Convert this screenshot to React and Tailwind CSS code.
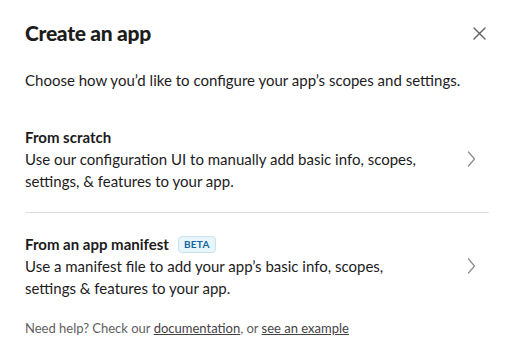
import React from 'react';

function Chevron() {
  return (
    <svg width="9" height="16" viewBox="0 0 9 16" fill="none" className="shrink-0">
      <path d="M1.5 1 L7.5 8 L1.5 15" stroke="#8a8a8a" strokeWidth="1.2" strokeLinecap="round" strokeLinejoin="round" />
    </svg>
  );
}

function Option({ title, badge, children }) {
  return (
    <button className="w-full flex items-center justify-between text-left py-[20px] pl-[25px] pr-[31px]">
      <div className="w-[402px]">
        <div className="flex items-center gap-[9px] text-[15px] leading-[22px] font-bold text-[#1d1c1d]">
          {title}
          {badge && (
            <span className="text-[10px] leading-[13px] font-bold tracking-[0.3px] text-[#1264a3] bg-[#e8f5fa] border border-[#c8e3f0] rounded-[4px] px-[5px] py-[1px]">
              {badge}
            </span>
          )}
        </div>
        <p className="text-[15px] leading-[22px] text-[#1d1c1d]">{children}</p>
      </div>
      <Chevron />
    </button>
  );
}

export default function App() {
  return (
    <div className="w-[507px] h-[357px] bg-white overflow-hidden" style={{ fontFamily: 'Lato, "Noto Sans", sans-serif' }}>
      {/* Header */}
      <div className="flex items-center justify-between pl-[25px] pr-[20px] pt-[19px]">
        <h2 className="text-[21px] leading-[28px] font-black tracking-[-0.3px] text-[#1d1c1d]">Create an app</h2>
        <button className="w-[16px] h-[16px] flex items-center justify-center">
          <svg width="13" height="13" viewBox="0 0 13 13">
            <path d="M1 1 L12 12 M12 1 L1 12" stroke="#616061" strokeWidth="1.4" strokeLinecap="round" />
          </svg>
        </button>
      </div>

      <p className="pl-[25px] mt-[22px] text-[15px] leading-[22px] text-[#1d1c1d]">
        Choose how you’d like to configure your app’s scopes and settings.
      </p>

      <div className="mt-[15px]">
        <Option title="From scratch">
          Use our configuration UI to manually add basic info, scopes, settings, &amp; features to your app.
        </Option>
        <div className="ml-[25px] mr-[18px] border-t border-[#dddddd]" />
        <Option title="From an app manifest" badge="BETA">
          Use a manifest file to add your app’s basic info, scopes, settings &amp; features to your app.
        </Option>
      </div>

      <p className="pl-[25px] text-[13px] leading-[18px] text-[#616061]">
        Need help? Check our <a className="underline text-[#454245]">documentation</a>, or{' '}
        <a className="underline text-[#454245]">see an example</a>
      </p>
    </div>
  );
}
